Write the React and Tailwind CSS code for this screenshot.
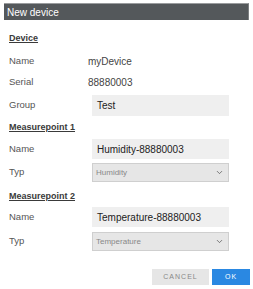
import { ChevronDown } from 'lucide-react';

function Heading({ children, className = '' }) {
    return (
        <div className={`h-[14px] flex items-center pl-[9px] text-[9px] font-bold underline text-[#3a3a3a] ${className}`}>
            {children}
        </div>
    );
}

function Row({ label, children, className = '' }) {
    return (
        <div className={`flex items-center ${className}`}>
            <div className="w-[88px] pl-[9px] text-[9.5px] text-[#555]">{label}</div>
            {children}
        </div>
    );
}

function Field({ value, h = 'h-[20px]' }) {
    return (
        <div className={`ml-[4px] w-[137px] ${h} bg-[#efefef] flex items-center pl-[5px] text-[10px] text-[#222]`}>
            {value}
        </div>
    );
}

function Select({ value }) {
    return (
        <div className="ml-[4px] w-[137px] h-[19px] bg-[#e6e6e6] border border-[#cfcfcf] flex items-center justify-between pl-[3px] pr-[4px] text-[8px] text-[#888]">
            <span>{value}</span>
            <ChevronDown size={9} strokeWidth={2} className="text-[#555]" />
        </div>
    );
}

export default function App() {
    return (
        <div className="w-[253px] h-[289px] bg-white font-['Liberation_Sans',Arial,sans-serif] flex flex-col">
            <div className="mx-[4px] mt-[3px] h-[17px] bg-[#54585b] border-t border-t-[#9a9c9e] border-r border-r-[#7c7f81] flex items-center pl-[3px] text-[10px] text-white">
                New device
            </div>

            <Heading className="mt-[12px]">Device</Heading>
            <Row label="Name" className="mt-[5px] h-[20px]">
                <span className="text-[10px] text-[#444]">myDevice</span>
            </Row>
            <Row label="Serial" className="mt-[1px] h-[20px]">
                <span className="text-[10px] text-[#444]">88880003</span>
            </Row>
            <Row label="Group" className="mt-[3px]">
                <Field value="Test" h="h-[21px]" />
            </Row>

            <Heading className="mt-[5px]">Measurepoint 1</Heading>
            <Row label="Name" className="mt-[4px]">
                <Field value="Humidity-88880003" />
            </Row>
            <Row label="Typ" className="mt-[4px]">
                <Select value="Humidity" />
            </Row>

            <Heading className="mt-[8px]">Measurepoint 2</Heading>
            <Row label="Name" className="mt-[3px]">
                <Field value="Temperature-88880003" />
            </Row>
            <Row label="Typ" className="mt-[5px]">
                <Select value="Temperature" />
            </Row>

            <div className="mt-[18px] flex justify-end gap-[3px] pr-[3px]">
                <button className="w-[57px] h-[16px] bg-[#e6e6e6] text-[7px] tracking-[1px] text-[#888]">CANCEL</button>
                <button className="w-[38px] h-[16px] bg-[#2a88e2] text-[7px] tracking-[1px] text-white">OK</button>
            </div>
        </div>
    );
}
